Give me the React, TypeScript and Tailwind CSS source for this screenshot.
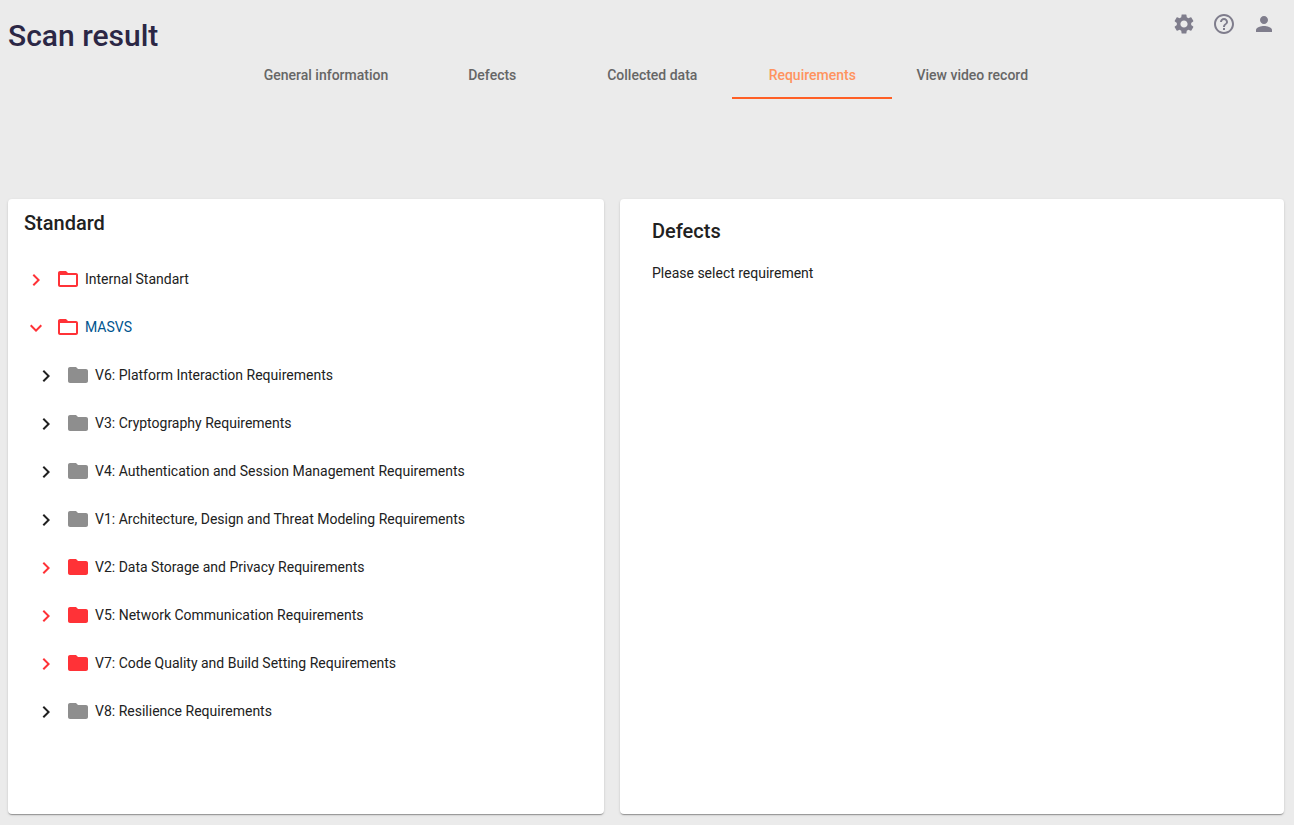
import { useState } from "react";
import {
  MdChevronRight,
  MdExpandMore,
  MdFolder,
  MdFolderOpen,
  MdHelpOutline,
  MdPerson,
  MdSettings,
} from "react-icons/md";

const tabs = ["General information", "Defects", "Collected data", "Requirements", "View video record"];

const groups = [
  { name: "V6: Platform Interaction Requirements", failed: false },
  { name: "V3: Cryptography Requirements", failed: false },
  { name: "V4: Authentication and Session Management Requirements", failed: false },
  { name: "V1: Architecture, Design and Threat Modeling Requirements", failed: false },
  { name: "V2: Data Storage and Privacy Requirements", failed: true },
  { name: "V5: Network Communication Requirements", failed: true },
  { name: "V7: Code Quality and Build Setting Requirements", failed: true },
  { name: "V8: Resilience Requirements", failed: false },
];

const cardClass =
  "rounded bg-white shadow-[0_2px_1px_-1px_rgba(0,0,0,0.2),0_1px_1px_0_rgba(0,0,0,0.14),0_1px_3px_0_rgba(0,0,0,0.12)]";

type RowProps = {
  name: string;
  failed: boolean;
  root?: boolean;
  open?: boolean;
  selected?: boolean;
  onToggle?: () => void;
};

function TreeRow({ name, failed, root, open, selected, onToggle }: RowProps) {
  const Chevron = open ? MdExpandMore : MdChevronRight;
  const Folder = root ? MdFolderOpen : MdFolder;
  return (
    <div className="flex h-12 items-center">
      <button
        type="button"
        aria-label={`Toggle ${name}`}
        onClick={onToggle}
        className={`flex h-10 w-10 items-center justify-center pt-0.5 ${failed ? "text-[#ff3237]" : "text-[#212121]"}`}
      >
        <Chevron size={24} />
      </button>
      <Folder size={24} className={failed ? "text-[#ff3237]" : "text-[#8e8e8e]"} />
      <a href="#" className={`ml-[5px] ${selected ? "text-[#00558f]" : "text-[#212121]"}`}>
        {name}
      </a>
    </div>
  );
}

export default function App() {
  const [active, setActive] = useState("Requirements");
  const [open, setOpen] = useState(true);

  return (
    <div className="flex min-h-screen flex-col bg-[#ebebeb] pb-[11px] font-['Roboto',sans-serif] text-sm text-[#212121]">
      <header className="flex h-[51px] items-start justify-between pl-2 pr-[18px]">
        <h1 className="pt-4 text-[30px] leading-10 font-medium text-[#2b2745]">Scan result</h1>
        <div className="flex gap-4 pt-3 text-[#7f7d8c]">
          <button type="button" aria-label="Settings"><MdSettings size={24} /></button>
          <button type="button" aria-label="Help"><MdHelpOutline size={24} /></button>
          <button type="button" aria-label="Account"><MdPerson size={24} /></button>
        </div>
      </header>

      <nav role="tablist" className="flex justify-center pl-2 pr-[10px]">
        {tabs.map((tab) => (
          <button
            key={tab}
            type="button"
            role="tab"
            aria-selected={active === tab}
            onClick={() => setActive(tab)}
            className={`h-12 min-w-40 border-b-2 px-6 pt-0.5 font-medium ${
              active === tab ? "border-[#ff5f25] text-[#ff935f]" : "border-transparent text-[#666666]"
            }`}
          >
            {tab}
          </button>
        ))}
      </nav>

      <main className="mt-[100px] grid flex-1 grid-cols-[596fr_664fr] gap-4 pl-2 pr-[10px]">
        <section className={cardClass}>
          <h2 className="px-4 pt-2 text-xl leading-8 font-medium">Standard</h2>
          <div className="px-2 pt-4">
            <TreeRow name="Internal Standart" failed root />
            <TreeRow name="MASVS" failed root selected open={open} onToggle={() => setOpen(!open)} />
            {open && (
              <div className="pl-[10px]">
                {groups.map((group) => (
                  <TreeRow key={group.name} name={group.name} failed={group.failed} />
                ))}
              </div>
            )}
          </div>
        </section>
        <section className={`${cardClass} px-8 pt-4`}>
          <h2 className="text-xl leading-8 font-medium">Defects</h2>
          <p className="mt-4 leading-5">Please select requirement</p>
        </section>
      </main>
    </div>
  );
}
